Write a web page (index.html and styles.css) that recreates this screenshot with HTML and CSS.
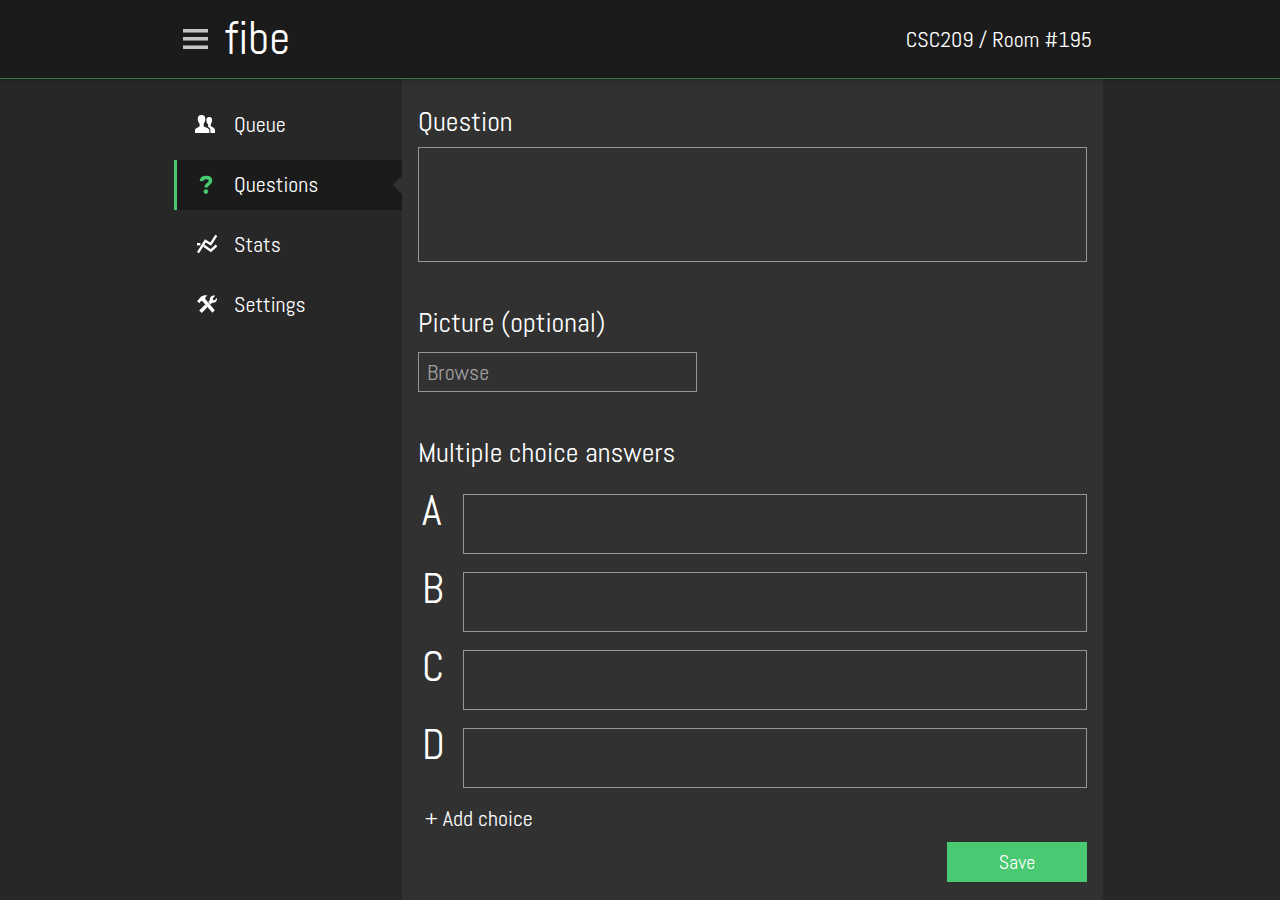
FILE: index.html
```html
<!DOCTYPE html>
<html lang="en">
<head>
<meta charset="utf-8">
<meta name="viewport" content="width=device-width, initial-scale=1">
<title>fibe</title>
<link rel="stylesheet" href="styles.css">
</head>
<body>
<header class="topbar">
  <div class="wrap topbar-row">
    <button class="menu" type="button" aria-label="Menu">
      <svg width="25" height="20" viewBox="0 0 25 20"><path fill="#c6c4c6" d="M0 0h25v3H0zM0 8h25v3H0zM0 17h25v3H0z"/><path fill="#777" d="M0 3h25v1H0zM0 11h25v1H0zM0 16h25v1H0z"/></svg>
    </button>
    <a class="logo" href="#">fibe</a>
    <span class="room">CSC209 / Room #195</span>
  </div>
</header>
<div class="wrap page">
  <nav class="sidebar">
    <a class="item" href="#">
      <svg class="icon people" width="20" height="20" viewBox="0 0 20 20"><g fill="#fff"><path d="M13 3.300C15.300 2.500 17.300 3.500 17.100 6.300c-.1 2-.7 3-1.300 3.800v1.700c0 1.200 4.200 1.700 4.200 4.200v3h-4.600v-2.900c0-1.800-1.200-2.700-2.600-3.500.6-.7.400-1.600.1-2.500-1-.9-1.400-2-1.500-3.600-.1-1.700.4-2.700 1.600-3.200z"/><path d="M6.400 1c2.900-.1 4.100 1.700 3.900 4.300-.1 2.100-.8 3.400-1.600 4.400v2.200c0 1.200 5.400 1.700 5.700 4.200V19H0v-2.900c.2-2.500 4.600-2.900 4.600-4.200V9.700C3.600 8.600 2.900 7.300 2.800 5.300 2.600 2.700 3.600 1.100 6.400 1z"/></g></svg>
      <span>Queue</span>
    </a>
    <a class="item active" href="#" aria-current="page">
      <svg class="icon" width="20" height="20" viewBox="0 0 20 20"><path d="M4.400 7.200C4.600 4.500 6.400 3.400 9.100 3.400c2.800 0 4.500 1.100 4.500 3.400 0 3.200-4.600 3.100-4.600 6.700" fill="none" stroke="#47c970" stroke-width="3.500"/><circle cx="8.900" cy="17.600" r="2.300" fill="#47c970"/></svg>
      <span>Questions</span>
    </a>
    <a class="item" href="#">
      <svg class="icon" width="20" height="20" viewBox="0 0 20 20"><g fill="none" stroke="#fff" stroke-width="2.400"><path d="M1 18.600 8.400 6.800l5.300 3.400L19.300 1.400"/><path d="m6.900 11.700 6.900 5 5.700-5.200"/><path d="M0 10.200h3.400"/></g></svg>
      <span>Stats</span>
    </a>
    <a class="item" href="#">
      <svg class="icon" width="20" height="20" viewBox="0 0 20 20"><g fill="#fff"><path d="M0 7.200 3.500 3.200C6 1 9 .8 10.800 1.700 8.800 2.200 8 3.200 8.300 4.900l9.500 11.300-2.400 2.500L5.700 7.400c-1.400-.8-2.300-.2-3 1.800z"/><path d="M18.300 1.600 15.800 4.500l.3 1.700 1.800-.2L20 3.700c.5 3.400-1.700 5.700-4.800 5l-1.700 1.900-2.300-2.600 1.600-1.800c-.5-3.200 2-5.500 5.500-4.600zM8.200 10.400l2.300 2.600-5.700 5.900-2.600-2.300z"/></g></svg>
      <span>Settings</span>
    </a>
  </nav>
  <main class="content">
    <form class="form">
      <div class="field question">
        <label class="label" for="question">Question</label>
        <textarea class="box" id="question"></textarea>
      </div>
      <div class="field picture">
        <label class="label" for="picture">Picture (optional)</label>
        <input class="box" id="picture" type="text" placeholder="Browse">
      </div>
      <fieldset class="answers">
        <legend class="label">Multiple choice answers</legend>
        <div class="choices">
          <div class="choice"><label class="letter" for="a">A</label><input class="box" id="a" type="text"></div>
          <div class="choice"><label class="letter" for="b">B</label><input class="box" id="b" type="text"></div>
          <div class="choice"><label class="letter" for="c">C</label><input class="box" id="c" type="text"></div>
          <div class="choice"><label class="letter" for="d">D</label><input class="box" id="d" type="text"></div>
        </div>
      </fieldset>
      <button class="add" type="button">+ Add choice</button>
      <button class="save" type="submit">Save</button>
    </form>
  </main>
</div>
</body>
</html>
```
FILE: styles.css
```css
* { box-sizing: border-box; }
body {
  margin: 0;
  min-height: 100vh;
  display: flex;
  flex-direction: column;
  background: #272727;
  color: #fff;
  font-family: Abel, "Liberation Sans Narrow", "Roboto Condensed", Roboto, sans-serif;
  font-size: 22px;
  line-height: 30px;
}
button, input, textarea { font: inherit; color: inherit; }
button { border: 0; padding: 0; background: none; cursor: pointer; }
a { color: inherit; text-decoration: none; }
.wrap { width: 100%; max-width: 926px; margin: 0 auto; }
.topbar {
  background: #1b1b1b;
  border-bottom: 1px solid #2f7a47;
  box-shadow: 0 1px 5px rgba(0, 0, 0, .3);
  position: relative;
}
.topbar-row { display: flex; align-items: center; height: 78px; padding: 0 11px 0 6px; }
.menu { display: flex; }
.logo { margin-left: 17px; font-size: 46px; line-height: 60px; }
.room { margin-left: auto; }
.page { flex: 1; display: flex; }
.sidebar {
  flex: 0 0 228px;
  margin-left: -3px;
  padding-top: 21px;
  display: flex;
  flex-direction: column;
  gap: 10px;
}
.item {
  position: relative;
  display: flex;
  align-items: center;
  gap: 17px;
  height: 50px;
  padding: 0 0 2px 20px;
  border-left: 3px solid transparent;
}
.people { margin: 0 2px 0 -2px; }
.active { background: #1b1b1b; border-color: #47c970; }
.active::after {
  content: "";
  position: absolute;
  right: 0;
  top: 16px;
  border: solid transparent;
  border-width: 9px 9px 9px 0;
  border-right-color: #313131;
}
.content { flex: 1; background: #313131; padding: 24px 16px 18px; }
.form { display: flex; flex-direction: column; }
.field { display: flex; flex-direction: column; }
.label { padding: 0; font-size: 28px; line-height: 38px; }
.box {
  display: block;
  width: 100%;
  margin: 0;
  padding: 0 8px;
  background: transparent;
  border: 1px solid #969696;
  border-radius: 0;
  resize: none;
}
.box::placeholder { color: #a0a0a0; opacity: 1; }
.question { gap: 6px; }
.question .box { height: 115px; }
.picture { margin-top: 42px; gap: 10px; }
.picture .box { max-width: 279px; height: 40px; }
.answers { border: 0; margin: 42px 0 0; padding: 0; min-width: 0; }
.choices { display: flex; flex-direction: column; gap: 18px; padding-top: 22px; }
.choice { display: flex; }
.choice .box { flex: 1; height: 60px; }
.letter { flex: 0 0 45px; padding-left: 4px; font-size: 42px; line-height: 34px; }
.add { align-self: flex-start; margin: 15px 0 0 7px; }
.save {
  align-self: flex-end;
  width: 140px;
  height: 40px;
  margin-top: 9px;
  background: #49c971;
  font-size: 20px;
}
```
